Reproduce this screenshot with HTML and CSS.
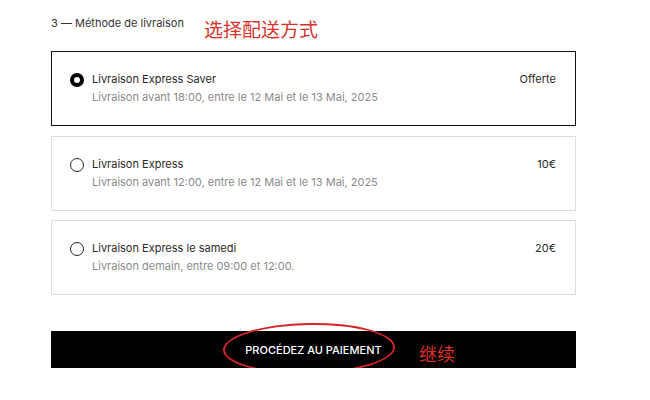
FILE: index.html
```html
<!DOCTYPE html>
<html lang="fr">
<head>
<meta charset="utf-8">
<link rel="stylesheet" href="styles.css">
</head>
<body>
<div class="page">
  <div class="head">
    <h2 class="step">3 — Méthode de livraison</h2>
    <span class="note note-top">选择配送方式</span>
  </div>
  <div class="options">
    <label class="opt selected">
      <span class="radio"></span>
      <span class="info">
        <span class="title">Livraison Express Saver</span>
        <span class="sub">Livraison avant 18:00, entre le 12 Mai et le 13 Mai, 2025</span>
      </span>
      <span class="price">Offerte</span>
    </label>
    <label class="opt">
      <span class="radio"></span>
      <span class="info">
        <span class="title">Livraison Express</span>
        <span class="sub">Livraison avant 12:00, entre le 12 Mai et le 13 Mai, 2025</span>
      </span>
      <span class="price">10€</span>
    </label>
    <label class="opt">
      <span class="radio"></span>
      <span class="info">
        <span class="title">Livraison Express le samedi</span>
        <span class="sub">Livraison demain, entre 09:00 et 12:00.</span>
      </span>
      <span class="price">20€</span>
    </label>
  </div>
  <div class="pay">
    <button class="pay-btn">PROCÉDEZ AU PAIEMENT</button>
    <span class="ring"></span>
    <span class="note note-btn">继续</span>
  </div>
</div>
</body>
</html>
```
FILE: styles.css
```css
html, body {
  margin: 0;
  padding: 0;
  background: #fff;
}
body {
  font-family: Inter, "Noto Sans", sans-serif;
  color: #222;
}
.page {
  width: 525px;
  padding-left: 51px;
}
.head {
  position: relative;
  height: 51px;
}
.step {
  margin: 0;
  padding-top: 16px;
  font-size: 11px;
  font-weight: 400;
  line-height: 14px;
  color: #333;
}
.note {
  position: absolute;
  color: #d8322b;
  font-family: "Noto Sans CJK SC", sans-serif;
  font-weight: 400;
}
.note-top {
  left: 153px;
  top: 16px;
  font-size: 19px;
  line-height: 26px;
}
.options {
  display: flex;
  flex-direction: column;
  gap: 9.5px;
}
.opt {
  display: flex;
  align-items: flex-start;
  height: 75px;
  box-sizing: border-box;
  border: 1px solid #dedede;
  padding: 20px 19px 0 18px;
}
.opt.selected {
  border: 1px solid #111;
}
.radio {
  width: 14px;
  height: 14px;
  box-sizing: border-box;
  border: 1.5px solid #222;
  border-radius: 50%;
  margin-top: 1px;
  margin-right: 8px;
  flex: none;
}
.selected .radio {
  border: 4.5px solid #000;
}
.info {
  flex: 1;
  display: flex;
  flex-direction: column;
  gap: 4px;
}
.title {
  font-size: 11px;
  line-height: 14px;
  color: #2a2a2a;
}
.sub {
  font-size: 11px;
  line-height: 14px;
  color: #8a8a8a;
}
.price {
  font-size: 11px;
  line-height: 14px;
  color: #2a2a2a;
}
.pay {
  position: relative;
  margin-top: 36px;
}
.pay-btn {
  display: block;
  width: 100%;
  height: 37px;
  border: 0;
  background: #000;
  color: #fff;
  font-family: Inter, "Noto Sans", sans-serif;
  font-size: 11px;
  font-weight: 500;
  padding: 0;
  cursor: pointer;
}
.ring {
  position: absolute;
  left: 172px;
  top: -8px;
  width: 172px;
  height: 51px;
  border: 2px solid #d3262a;
  border-radius: 50%;
  box-sizing: border-box;
  transform: rotate(-1deg);
}
.note-btn {
  left: 368px;
  top: 10px;
  font-size: 18px;
  line-height: 24px;
}
```
